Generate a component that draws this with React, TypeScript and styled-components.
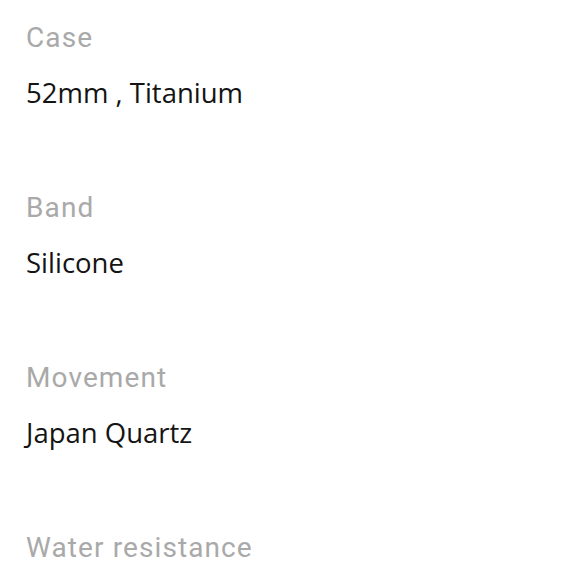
import React from "react";
import styled, { createGlobalStyle } from "styled-components";

const Global = createGlobalStyle`
  html, body { margin: 0; padding: 0; background: #ffffff; }
`;

const Page = styled.div`
  display: flex;
  flex-direction: column;
  gap: 75px;
  padding: 18px 0 0 26px;
`;

const Item = styled.div`
  display: flex;
  flex-direction: column;
`;

const Label = styled.div`
  font-family: Roboto, "Liberation Sans", sans-serif;
  font-size: 28px;
  line-height: 40px;
  letter-spacing: 1.1px;
  color: #a9a9a9;
`;

const Value = styled.div`
  font-family: "Open Sans", "Liberation Sans", sans-serif;
  font-size: 27.5px;
  line-height: 40px;
  margin-top: 15px;
  color: #141414;
`;

const specs = [
  { label: "Case", value: "52mm , Titanium" },
  { label: "Band", value: "Silicone" },
  { label: "Movement", value: "Japan Quartz" },
  { label: "Water resistance", value: "" },
];

export default function App() {
  return (
    <>
      <Global />
      <Page>
        {specs.map((s) => (
          <Item key={s.label}>
            <Label>{s.label}</Label>
            {s.value && <Value>{s.value}</Value>}
          </Item>
        ))}
      </Page>
    </>
  );
}
